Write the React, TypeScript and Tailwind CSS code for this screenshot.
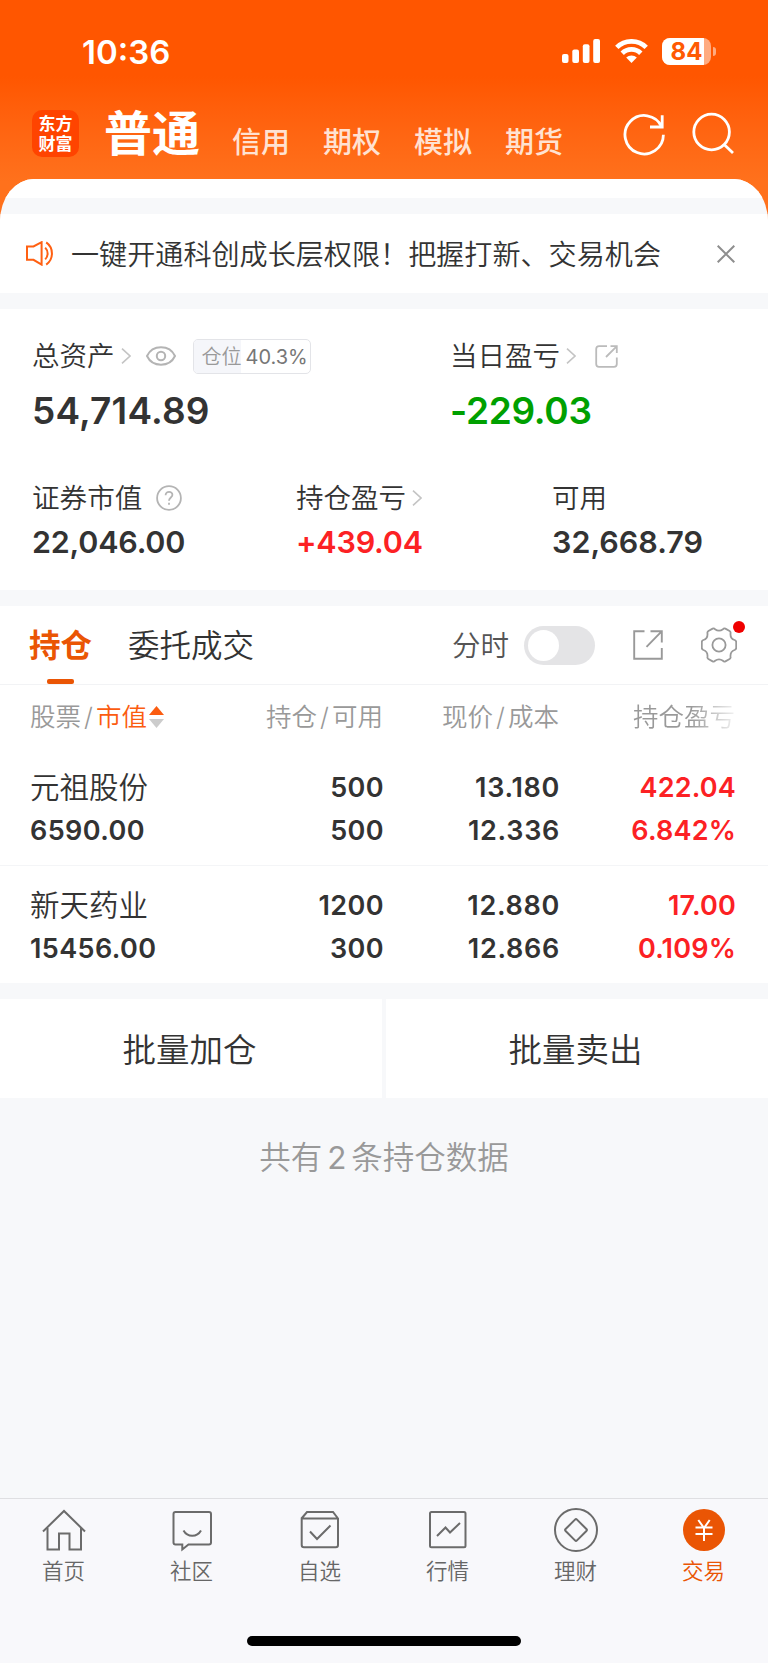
import React from "react";

const accounts = ["信用", "期权", "模拟", "期货"];

const holdings = [
  {
    id: 1,
    name: "元祖股份",
    value: "6590.00",
    amount: "500",
    available: "500",
    price: "13.180",
    cost: "12.336",
    profit: "422.04",
    rate: "6.842%",
  },
  {
    id: 2,
    name: "新天药业",
    value: "15456.00",
    amount: "1200",
    available: "300",
    price: "12.880",
    cost: "12.866",
    profit: "17.00",
    rate: "0.109%",
  },
];

const Chevron = () => (
  <svg width="10" height="16" viewBox="0 0 10 16" fill="none" stroke="#c4c4c4" strokeWidth="1.6">
    <path d="M1 0.6 L9 8 L1 15.4" />
  </svg>
);

const StatusBar = () => (
  <div className="flex h-[103px] items-center pl-[82px] pr-[52px]">
    <p className="flex-1 text-[33px] leading-[36px] font-semibold">
      10:36
    </p>
    <svg className="-mt-px" width="38" height="24" viewBox="0 0 38 24" fill="white">
      <rect x="0" y="15" width="6.5" height="9" rx="2" />
      <rect x="10.3" y="10.5" width="6.7" height="13.5" rx="2" />
      <rect x="20.8" y="5.3" width="6.7" height="18.7" rx="2" />
      <rect x="31.2" y="0" width="6.8" height="24" rx="2" />
    </svg>
    <svg className="-mt-px ml-[15px]" width="33" height="24" viewBox="0 0 33 24" fill="none" stroke="white" strokeWidth="4.8">
      <path d="M1.8 8.4 A21 21 0 0 1 31.2 8.4" />
      <path d="M7.2 14.2 A13.2 13.2 0 0 1 25.8 14.2" />
      <path d="M16.5 24 L11.2 18.6 A7.6 7.6 0 0 1 21.8 18.6 Z" fill="white" stroke="none" />
    </svg>
    <div className="relative -mt-px ml-[14px] flex h-[27px] w-[49px] items-center justify-center overflow-hidden rounded-[8px] bg-white/50">
      <div className="absolute inset-y-0 left-0 w-[41.5px] bg-white" />
      <span className="relative text-[24px] leading-[27px] font-bold text-[#ff5a03]">84</span>
    </div>
    <div className="-mt-px ml-[2px] h-[9px] w-[3px] rounded-r-full bg-white/50" />
  </div>
);

const AccountNav = () => (
  <div className="flex h-[76px] items-start pl-8 pr-[34px]">
    <div className="mt-[7px] flex h-[47px] w-[47px] flex-col items-center justify-center rounded-[10px] bg-[#ff4400] pt-px text-[17px] leading-[20px] font-bold">
      <span>东方</span>
      <span>财富</span>
    </div>
    <p className="ml-[25px] mt-[7px] text-[48px] leading-[48px] font-bold">普通</p>
    <div className="ml-8 mt-[25px] flex gap-[33px] text-[29px] leading-[30px] font-medium text-[#ffe2d2]">
      {accounts.map((i) => (
        <p key={i}>{i}</p>
      ))}
    </div>
    <svg className="ml-auto mt-[9px]" width="42" height="44" viewBox="0 0 42 44" fill="none" stroke="white" strokeWidth="2.8">
      <path d="M40.4 22.8 A19.2 19.2 0 1 1 38.6 14.6" />
      <path d="M39.2 3.2 V15 H27" />
    </svg>
    <svg className="ml-[27px] mt-[9px]" width="42" height="44" viewBox="0 0 42 44" fill="none" stroke="white" strokeWidth="2.8">
      <circle cx="19.6" cy="20" r="17.8" />
      <path d="M31.6 32 L41 41" />
    </svg>
  </div>
);

const Notice = () => (
  <div className="flex h-[79px] items-center bg-white pl-[26px] pr-[33px]">
    <svg width="28" height="25" viewBox="0 0 28 25" fill="none" stroke="#ff6012" strokeWidth="2">
      <path d="M1 5.5 H7.5 L15.6 1.2 V23.6 L7.5 18.8 H1 Z" />
      <path d="M19.2 6.6 A8.4 8.4 0 0 1 19.2 18.4" />
      <path d="M20.2 1.4 A13.6 13.6 0 0 1 20.2 23.6" />
    </svg>
    <p className="ml-[17px] flex-1 pt-[2px] text-[28.1px] leading-[36px] whitespace-nowrap text-[#333]">
      一键开通科创成长层权限！把握打新、交易机会
    </p>
    <svg width="18" height="18" viewBox="0 0 18 18" fill="none" stroke="#8e8e8e" strokeWidth="2">
      <path d="M0.7 0.7 L17.3 17.3 M17.3 0.7 L0.7 17.3" />
    </svg>
  </div>
);

const Summary = () => (
  <div className="h-[281px] bg-white pl-[32px] text-[#333]">
    <div className="flex pt-[29px]">
      <div className="w-[418px]">
        <div className="flex h-9 items-center">
          <p className="text-[27.5px] leading-9">总资产</p>
          <div className="ml-[6px]">
            <Chevron />
          </div>
          <svg className="ml-[15px]" width="30" height="20" viewBox="0 0 30 20" fill="none" stroke="#b4b4b4" strokeWidth="2">
            <path d="M1 10 C6.5 -1.6 23.5 -1.6 29 10 C23.5 21.6 6.5 21.6 1 10 Z" />
            <circle cx="15" cy="10" r="4.2" />
          </svg>
          <div className="ml-[17px] flex h-[35px] w-[118px] overflow-hidden rounded-[5px] border border-[#e3e4e8] text-[20px] leading-[35px]">
            <p className="w-[47px] bg-[#f5f6fa] pl-2 text-[#999] whitespace-nowrap">仓位</p>
            <p className="pl-[5px] font-normal text-[#777]">40.3%</p>
          </div>
        </div>
        <p className="mt-[17px] text-[37px] leading-[40px] font-semibold tracking-[0.15px]">54,714.89</p>
      </div>
      <div>
        <div className="flex h-9 items-center">
          <p className="text-[27.5px] leading-9">当日盈亏</p>
          <div className="ml-[6px]">
            <Chevron />
          </div>
          <svg className="ml-[19px]" width="23" height="23" viewBox="0 0 23 23" fill="none" stroke="#bbbbbb" strokeWidth="1.8">
            <path d="M12 1.2 H4 Q1.2 1.2 1.2 4 V19 Q1.2 21.8 4 21.8 H19 Q21.8 21.8 21.8 19 V12.5" />
            <path d="M15.5 1.2 H21.8 V8 M21.4 1.6 L11 12" />
          </svg>
        </div>
        <p className="mt-[17px] text-[37px] leading-[40px] font-semibold tracking-[-0.3px] text-[#00a000]">-229.03</p>
      </div>
    </div>
    <div className="mt-[49px] flex">
      <div className="w-[264px]">
        <div className="flex h-9 items-center">
          <p className="text-[27.6px] leading-9">证券市值</p>
          <svg className="ml-[14px]" width="26" height="26" viewBox="0 0 26 26" fill="none" stroke="#b4b4b4" strokeWidth="1.8">
            <circle cx="13" cy="13" r="11.9" />
            <path d="M9.6 10.2 C9.6 5.6 16.6 5.8 16.4 10 C16.3 12.4 13 12.8 13 15.8 M13 17.8 V19.8" />
          </svg>
        </div>
        <p className="mt-[8px] text-[30.5px] leading-[36px] font-semibold tracking-[-0.2px]">22,046.00</p>
      </div>
      <div className="w-[256px]">
        <div className="flex h-9 items-center">
          <p className="text-[27.5px] leading-9">持仓盈亏</p>
          <div className="ml-[6px]">
            <Chevron />
          </div>
        </div>
        <p className="mt-[8px] text-[30.5px] leading-[36px] font-semibold tracking-[-0.2px] text-[#fc2124]">+439.04</p>
      </div>
      <div>
        <p className="text-[27.5px] leading-9">可用</p>
        <p className="mt-[8px] text-[30.5px] leading-[36px] font-semibold">32,668.79</p>
      </div>
    </div>
  </div>
);

const HoldingTabs = () => (
  <div className="flex h-[79px] items-center border-b border-[#f2f3f5] bg-white pl-[29px] pr-[31px]">
    <div className="relative flex h-full items-center pt-[2px] text-[31.5px] font-bold text-[#ea5504]">
      持仓
      <span className="absolute bottom-0 left-[17.5px] h-[5px] w-[27px] rounded-[2px] bg-[#ea5504]" />
    </div>
    <p className="ml-9 pt-[2px] text-[31.5px] text-[#333]">委托成交</p>
    <p className="ml-auto pt-[2px] text-[28.5px] text-[#555]">分时</p>
    <div className="ml-[15px] flex h-[39px] w-[71px] items-center rounded-full bg-[#e4e4e6] pl-[4px]">
      <span className="h-[31px] w-[31px] rounded-full bg-white" />
    </div>
    <svg className="ml-[38px]" width="30" height="30" viewBox="0 0 30 30" fill="none" stroke="#999999" strokeWidth="1.9">
      <path d="M11.5 1.2 H1.2 V28.8 H28.8 V18" />
      <path d="M17.5 1.2 H28.8 V12.5 M28.4 1.6 L13.5 16.8" />
    </svg>
    <div className="relative ml-[38px]">
      <svg width="36" height="36" viewBox="0 0 36 36" fill="none" stroke="#999999" strokeWidth="1.8" strokeLinejoin="round">
        <path d="M11.6 1.6 Q13 1 14 2.2 Q18 5 22 2.2 Q23 1 24.4 1.6 L28.6 4 Q30 5 29.5 6.6 Q29.2 11.6 33.6 13 Q35.2 13.6 35.2 15.2 V20.8 Q35.2 22.4 33.6 23 Q29.2 24.4 29.5 29.4 Q30 31 28.6 32 L24.4 34.4 Q23 35 22 33.8 Q18 31 14 33.8 Q13 35 11.6 34.4 L7.4 32 Q6 31 6.5 29.4 Q6.8 24.4 2.4 23 Q0.8 22.4 0.8 20.8 V15.2 Q0.8 13.6 2.4 13 Q6.8 11.6 6.5 6.6 Q6 5 7.4 4 Z" />
        <circle cx="18" cy="18" r="6.6" />
      </svg>
      <span className="absolute -top-[6px] right-[-8px] h-3 w-3 rounded-full bg-[#f00000]" />
    </div>
  </div>
);

const Holdings = () => (
  <div className="bg-white">
    <div className="grid h-16 grid-cols-[177px_176px_176px_176px] items-center pl-[30px] text-right text-[25.5px] leading-[30px] text-[#999]">
      <div className="flex items-center whitespace-nowrap">
        股票<span className="mx-[3px]">/</span>
        <span className="text-[#fb5c10]">市值</span>
        <svg className="ml-[2px]" width="15" height="22" viewBox="0 0 15 22">
          <path d="M7.5 0 L15 9 H0 Z" fill="#fb5c10" />
          <path d="M7.5 22 L15 13 H0 Z" fill="#cccccc" />
        </svg>
      </div>
      <p>
        持仓<span className="mx-[3px]">/</span>可用
      </p>
      <p>
        现价<span className="mx-[3px]">/</span>成本
      </p>
      <p className="bg-gradient-to-r from-[#999] from-75% to-[#99999922] bg-clip-text text-transparent">
        持仓盈亏
      </p>
    </div>
    {holdings.map((i) => (
      <div
        key={i.id}
        className="grid h-[117px] grid-cols-[178px_176px_176px_176px] border-b border-[#f4f5f7] pl-[30px] pt-[17px] text-right text-[27px] leading-[43px] font-semibold tracking-[0.4px] text-[#333] last:border-0 last:pt-[18px]"
      >
        <div className="text-left">
          <p className="text-[29.5px] font-[350] tracking-normal">{i.name}</p>
          <p>{i.value}</p>
        </div>
        <div>
          <p>{i.amount}</p>
          <p>{i.available}</p>
        </div>
        <div className="tracking-[0.7px]">
          <p>{i.price}</p>
          <p>{i.cost}</p>
        </div>
        <div className="tracking-[0.2px] text-[#fc2124]">
          <p>{i.profit}</p>
          <p>{i.rate}</p>
        </div>
      </div>
    ))}
  </div>
);

const tabs = [
  {
    label: "首页",
    icon: (
      <>
        <path d="M1 23.5 L22 3 L43 23.5" />
        <path d="M5.5 20 V41.5 H17 V25.5 H27.5 V41.5 H39 V20" />
      </>
    ),
  },
  {
    label: "社区",
    icon: (
      <>
        <path d="M5.5 4 H39 Q41 4 41 6 V34.5 Q41 36.5 39 36.5 H18.5 L12.3 41.5 V36.5 H5.5 Q3.5 36.5 3.5 34.5 V6 Q3.5 4 5.5 4 Z" />
        <path d="M13.5 22.5 C17.5 29.5 27 29.5 31 22.5" />
      </>
    ),
  },
  {
    label: "自选",
    icon: (
      <>
        <path d="M3.5 10.5 L9 4 H35 L40 10.5 V37 Q40 39.3 37.7 39.3 H6 Q3.7 39.3 3.7 37 V10.5 H40" />
        <path d="M12 23.5 L19 31 L32.5 17.5" />
      </>
    ),
  },
  {
    label: "行情",
    icon: (
      <>
        <rect x="4" y="4" width="35.5" height="35.3" rx="1.5" />
        <path d="M11 28 L19.5 19.5 L24 24.5 L34 15" />
      </>
    ),
  },
  {
    label: "理财",
    icon: (
      <>
        <circle cx="22" cy="22" r="21" />
        <path d="M21 11.6 Q22 10.6 23 11.6 L32.4 21 Q33.4 22 32.4 23 L23 32.4 Q22 33.4 21 32.4 L11.6 23 Q10.6 22 11.6 21 Z" />
      </>
    ),
  },
  {
    label: "交易",
    active: true,
    icon: (
      <>
        <circle cx="22" cy="22" r="21" fill="#ea5504" stroke="none" />
        <path d="M16.3 12 L22 20 L27.7 12 M13.5 19.6 H30.5 M13.5 26 H30.5 M22 20 V33" stroke="white" />
      </>
    ),
  },
];

const TabBar = () => (
  <div className="flex h-[165px] flex-col items-center border-t border-[#dfdfe2] bg-[#f8f8fb]">
    <div className="grid w-full grid-cols-6">
      {tabs.map((i) => (
        <div key={i.label} className="flex flex-col items-center pt-[9px] pr-px">
          <svg width="44" height="44" viewBox="0 0 44 44" fill="none" stroke="#6b6b6b" strokeWidth="2">
            {i.icon}
          </svg>
          <p className={`mt-[4px] text-[21.5px] leading-[30px] ${i.active ? "text-[#ea5504]" : "text-[#666]"}`}>
            {i.label}
          </p>
        </div>
      ))}
    </div>
    <div className="mt-auto mb-[17px] h-[10px] w-[274px] rounded-full bg-black" />
  </div>
);

const App = () => {
  return (
    <div className="flex h-[1663px] w-[768px] flex-col overflow-hidden bg-[#f7f8fa] font-['Inter','Noto_Sans_CJK_SC',sans-serif] font-[350]">
      <div className="bg-gradient-to-b from-[#ff5600] from-26% to-[#ff711c] to-62%">
        <div className="text-white">
          <StatusBar />
          <AccountNav />
        </div>
        <div className="overflow-hidden rounded-[34px_34px_0_0/42px_42px_0_0] bg-[#f7f8fa]">
          <div className="mb-4 h-[19px] bg-white" />
          <Notice />
        </div>
      </div>
      <div className="mt-4">
        <Summary />
      </div>
      <div className="mt-4">
        <HoldingTabs />
        <Holdings />
      </div>
      <div className="mt-4 grid h-[99px] grid-cols-2 gap-1 text-center text-[33.5px] leading-[102px] text-[#333]">
        <p className="h-[99px] bg-white pr-[3px]">批量加仓</p>
        <p className="h-[99px] bg-white pr-[3px]">批量卖出</p>
      </div>
      <p className="mt-[40px] text-center text-[31.5px] leading-[40px] text-[#999]">
        共有<span className="mx-[5px] font-normal">2</span>条持仓数据
      </p>
      <div className="mt-auto">
        <TabBar />
      </div>
    </div>
  );
};

export default App;
